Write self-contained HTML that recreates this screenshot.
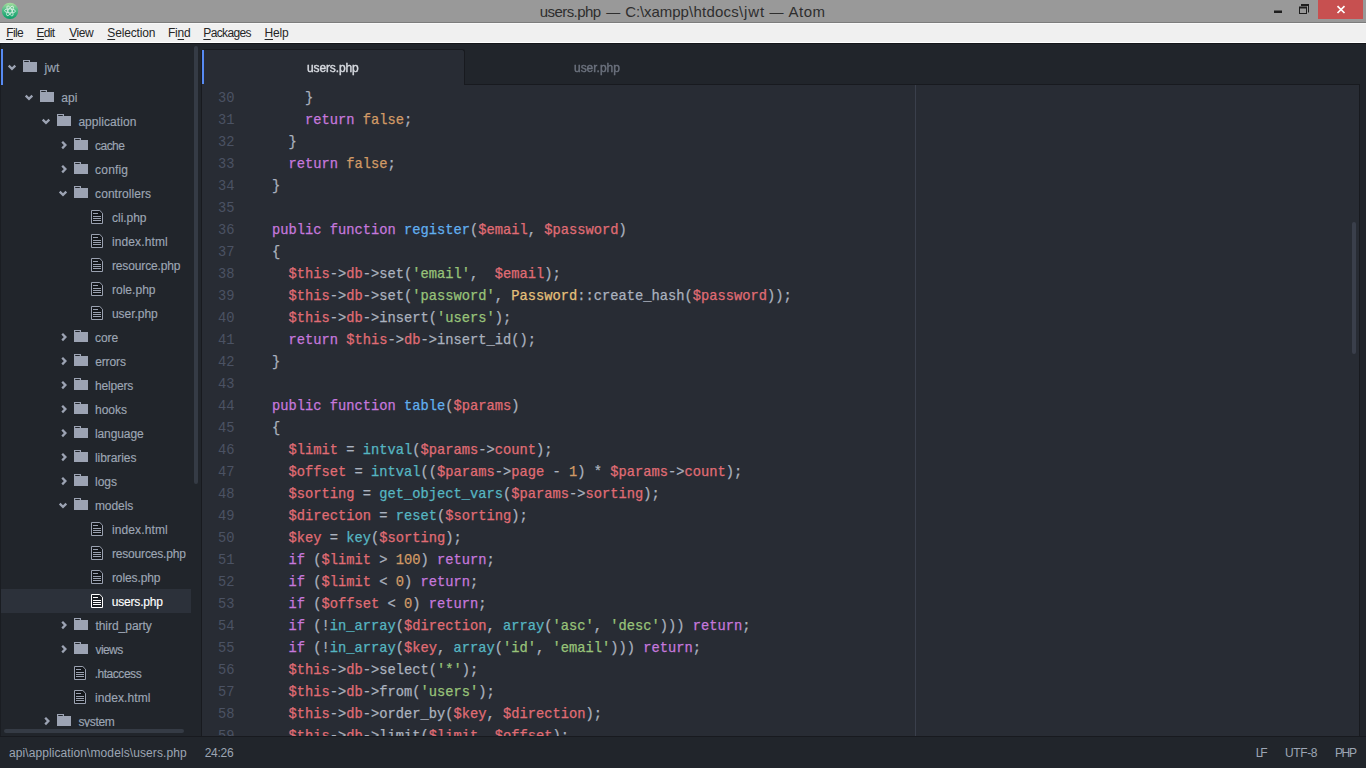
<!DOCTYPE html>
<html><head><meta charset="utf-8"><title>users.php — C:\xampp\htdocs\jwt — Atom</title>
<style>
html,body{margin:0;padding:0;}
body{width:1366px;height:768px;overflow:hidden;position:relative;background:#21252b;font-family:"Liberation Sans",sans-serif;font-size:12px;color:#9da5b4;}
div{position:absolute;box-sizing:border-box;white-space:pre;}
.ic{position:absolute;}
/* title bar */
#title{left:0;top:0;width:1366px;height:23px;background:#999999;border-bottom:1px solid #7c7c7c;}
.tx{top:1px;height:22px;line-height:22px;font-size:15px;color:#2e2e2e;}
#close{left:1318px;top:0;width:45px;height:19px;background:#c75050;}
/* menu */
#menu{left:0;top:23px;width:1366px;height:20px;background:#f0f0f0;border-top:1px solid #f8f8f8;border-bottom:1px solid #ffffff;}
.mi{top:23px;height:21px;line-height:21px;font-size:12px;color:#262626;}
.mi u{text-decoration:underline;text-underline-offset:2px;text-decoration-thickness:1px;}
#topline{left:0;top:43px;width:1366px;height:1px;background:#14161a;}
/* tree */
#tree{left:0;top:44px;width:202px;height:692px;background:#21252b;}
#treeL{left:0;top:44px;width:1px;height:692px;background:#1a1d22;}
.tl{height:24px;line-height:24px;font-size:12px;color:#9da5b4;-webkit-text-stroke:0.15px;}
.tl.sel{color:#ffffff;}
#selrow{left:1px;top:589px;width:190px;height:24px;background:#2c313a;}
#rootbar{left:1px;top:49px;width:2px;height:36px;background:#578af2;}
#tvs{left:194px;top:46px;width:4px;height:438px;background:#353b45;border-radius:2px;}
#ths{left:4px;top:729px;width:180px;height:4px;background:#353b45;border-radius:2px;}
#treeclip{left:0;top:44px;width:191px;height:683px;overflow:hidden;}
#treeclip>div{left:0;top:-44px;width:202px;height:768px;}
/* editor */
#tabbar{left:202px;top:44px;width:1164px;height:41px;background:#21252b;}
#tabline{left:202px;top:84px;width:1158px;height:1px;background:#181a1f;}
#tab1{left:202px;top:49px;width:263px;height:36px;background:#282c34;border-radius:3px 3px 0 0;border-top:1px solid #181a1f;border-right:1px solid #181a1f;}
#tab1bar{left:202px;top:50px;width:2px;height:34px;background:#578af2;}
.tt{top:50px;height:34px;line-height:36px;font-size:12px;-webkit-text-stroke:0.4px;will-change:transform;}
#editor{left:202px;top:85px;width:1157px;height:651px;background:#282c34;}
#edl{left:201px;top:50px;width:1px;height:686px;background:#181a1f;}
#edr{left:1359px;top:84px;width:1px;height:653px;background:#181a1f;}
#evs{left:1352px;top:222px;width:4px;height:132px;background:#3a3f4b;border-radius:2px;}
.ln{left:202px;width:32.5px;text-align:right;height:22px;line-height:22px;font-family:"Liberation Mono",monospace;font-size:13.75px;color:#4b5263;}
.cl{left:255.4px;height:22px;line-height:22px;font-family:"Liberation Mono",monospace;font-size:13.75px;color:#abb2bf;-webkit-text-stroke:0.25px;}
.k{color:#c678dd}.c{color:#d19a66}.f{color:#61afef}.v{color:#e06c75}.s{color:#98c379}.y{color:#e5c07b}.b{color:#56b6c2}
#guide{left:915px;top:85px;width:1px;height:651px;background:#3a3f4b;}
/* status */
#status{left:0;top:736px;width:1366px;height:32px;background:#21252b;border-top:1px solid #181a1f;}
.st{top:738px;height:31px;line-height:31px;font-size:12px;color:#9da5b4;}
</style></head><body>
<div id="title"></div>
<svg class="ic" style="left:1px;top:2px" width="18" height="18" viewBox="0 0 18 18">
<defs><linearGradient id="ag" x1="0" y1="0" x2="0" y2="1"><stop offset="0" stop-color="#aadf9e"/><stop offset="0.45" stop-color="#4fbc87"/><stop offset="1" stop-color="#0a9f68"/></linearGradient></defs>
<circle cx="9" cy="8.9" r="8.2" fill="url(#ag)"/>
<g fill="none" stroke="#ffffff" stroke-width="0.8" opacity="0.8">
<ellipse cx="9" cy="8.9" rx="2.0" ry="5.5" transform="rotate(93 9 8.9)"/>
<ellipse cx="9" cy="8.9" rx="2.0" ry="5.5" transform="rotate(33 9 8.9)"/>
<ellipse cx="9" cy="8.9" rx="2.0" ry="5.5" transform="rotate(-27 9 8.9)"/>
</g></svg>
<div class="tx fx" id="tt0" style="left:539.76px;letter-spacing:-0.562px">users.php </div><div class="tx fx" id="tt1" style="left:606.17px;letter-spacing:0.000px;font-size:14px">— </div><div class="tx fx" id="tt2" style="left:625.24px;letter-spacing:-0.097px">C:\xampp</div><div class="tx fx" id="tt3" style="left:689.11px;letter-spacing:0.204px">\htdocs</div><div class="tx fx" id="tt4" style="left:739.09px;letter-spacing:0.862px">\jwt </div><div class="tx fx" id="tt5" style="left:769.44px;letter-spacing:0.000px;font-size:14px">— </div><div class="tx fx" id="tt6" style="left:788.47px;letter-spacing:0.492px">Atom</div>
<div id="close"></div>
<svg class="ic" style="left:1270px;top:0" width="96" height="22" viewBox="0 0 96 22">
<rect x="4" y="10.5" width="8" height="2.5" fill="#1e1e1e"/>
<path d="M31.5 5.5h7v7" fill="none" stroke="#1e1e1e" stroke-width="1"/><path d="M31 5h8" stroke="#1e1e1e" stroke-width="2"/>
<rect x="29.5" y="7.5" width="7" height="6" fill="none" stroke="#1e1e1e" stroke-width="1"/><path d="M29 7.5h8" stroke="#1e1e1e" stroke-width="2"/>
<path d="M67.5 6.2l7 6.8M74.5 6.2l-7 6.8" stroke="#ffffff" stroke-width="1.7" fill="none"/>
</svg>
<div id="menu"></div>
<div class="mi fx" id="m0" style="left:6.21px;letter-spacing:-0.596px"><u>F</u>ile</div><div class="mi fx" id="m1" style="left:36.60px;letter-spacing:-0.762px"><u>E</u>dit</div><div class="mi fx" id="m2" style="left:69.21px;letter-spacing:-0.412px"><u>V</u>iew</div><div class="mi fx" id="m3" style="left:107.34px;letter-spacing:-0.175px"><u>S</u>election</div><div class="mi fx" id="m4" style="left:167.98px;letter-spacing:-0.194px">Fi<u>n</u>d</div><div class="mi fx" id="m5" style="left:203.34px;letter-spacing:-0.638px"><u>P</u>ackages</div><div class="mi fx" id="m6" style="left:264.60px;letter-spacing:-0.235px"><u>H</u>elp</div>
<div id="topline"></div>

<div id="tree"></div>
<div id="treeL"></div>
<div id="selrow"></div>
<div id="rootbar"></div>
<div id="treeclip"><div>
<svg class="ic" width="16" height="13" viewBox="0 0 16 13" style="left:22.0px;top:60px"><path d="M1 0h7v2h7v10h-14z" fill="#9ca3b3"/><rect x="2.2" y="1" width="4.6" height="1" fill="#21252b"/></svg>
<svg class="ic" width="10" height="8" viewBox="0 0 10 8" style="left:7px;top:64px"><path transform="translate(0.5 0.3)" d="M1.2 1.3L4.5 4.5L7.8 1.3" fill="none" stroke="#9ca3b3" stroke-width="2.3"/></svg>
<div class="tl fx" id="t0" style="left:44.43px;letter-spacing:0.168px;top:56px">jwt</div>
<svg class="ic" width="16" height="13" viewBox="0 0 16 13" style="left:39.0px;top:90px"><path d="M1 0h7v2h7v10h-14z" fill="#9ca3b3"/><rect x="2.2" y="1" width="4.6" height="1" fill="#21252b"/></svg>
<svg class="ic" width="10" height="8" viewBox="0 0 10 8" style="left:24px;top:94px"><path transform="translate(0.5 0.3)" d="M1.2 1.3L4.5 4.5L7.8 1.3" fill="none" stroke="#9ca3b3" stroke-width="2.3"/></svg>
<div class="tl fx" id="t1" style="left:61.14px;letter-spacing:0.151px;top:86px">api</div>
<svg class="ic" width="16" height="13" viewBox="0 0 16 13" style="left:56.0px;top:114px"><path d="M1 0h7v2h7v10h-14z" fill="#9ca3b3"/><rect x="2.2" y="1" width="4.6" height="1" fill="#21252b"/></svg>
<svg class="ic" width="10" height="8" viewBox="0 0 10 8" style="left:41px;top:118px"><path transform="translate(0.5 0.3)" d="M1.2 1.3L4.5 4.5L7.8 1.3" fill="none" stroke="#9ca3b3" stroke-width="2.3"/></svg>
<div class="tl fx" id="t2" style="left:78.39px;letter-spacing:0.064px;top:110px">application</div>
<svg class="ic" width="16" height="13" viewBox="0 0 16 13" style="left:73.0px;top:138px"><path d="M1 0h7v2h7v10h-14z" fill="#9ca3b3"/><rect x="2.2" y="1" width="4.6" height="1" fill="#21252b"/></svg>
<svg class="ic" width="8" height="10" viewBox="0 0 8 10" style="left:60px;top:140px"><path transform="translate(0.9 0.6)" d="M1.3 1.2L4.5 4.5L1.3 7.8" fill="none" stroke="#9ca3b3" stroke-width="2.3"/></svg>
<div class="tl fx" id="t3" style="left:95.11px;letter-spacing:-0.560px;top:134px">cache</div>
<svg class="ic" width="16" height="13" viewBox="0 0 16 13" style="left:73.0px;top:162px"><path d="M1 0h7v2h7v10h-14z" fill="#9ca3b3"/><rect x="2.2" y="1" width="4.6" height="1" fill="#21252b"/></svg>
<svg class="ic" width="8" height="10" viewBox="0 0 8 10" style="left:60px;top:164px"><path transform="translate(0.9 0.6)" d="M1.3 1.2L4.5 4.5L1.3 7.8" fill="none" stroke="#9ca3b3" stroke-width="2.3"/></svg>
<div class="tl fx" id="t4" style="left:95.11px;letter-spacing:0.172px;top:158px">config</div>
<svg class="ic" width="16" height="13" viewBox="0 0 16 13" style="left:73.0px;top:186px"><path d="M1 0h7v2h7v10h-14z" fill="#9ca3b3"/><rect x="2.2" y="1" width="4.6" height="1" fill="#21252b"/></svg>
<svg class="ic" width="10" height="8" viewBox="0 0 10 8" style="left:58px;top:190px"><path transform="translate(0.5 0.3)" d="M1.2 1.3L4.5 4.5L7.8 1.3" fill="none" stroke="#9ca3b3" stroke-width="2.3"/></svg>
<div class="tl fx" id="t5" style="left:95.11px;letter-spacing:0.048px;top:182px">controllers</div>
<svg class="ic" width="14" height="14" viewBox="0 0 14 14" style="left:90.0px;top:210px"><path d="M1.5 0.5H9.8L12.5 3.2V13.5H1.5z" fill="#14171b" stroke="#9aa1b0" stroke-width="1"/><path d="M3 3.5h5M3 6.5h8M3 8.5h8M3 10.5h8" stroke="#9aa1b0" stroke-width="1" fill="none"/></svg>
<div class="tl fx" id="t6" style="left:112.11px;letter-spacing:-0.048px;top:206px">cli.php</div>
<svg class="ic" width="14" height="14" viewBox="0 0 14 14" style="left:90.0px;top:234px"><path d="M1.5 0.5H9.8L12.5 3.2V13.5H1.5z" fill="#14171b" stroke="#9aa1b0" stroke-width="1"/><path d="M3 3.5h5M3 6.5h8M3 8.5h8M3 10.5h8" stroke="#9aa1b0" stroke-width="1" fill="none"/></svg>
<div class="tl fx" id="t7" style="left:111.91px;letter-spacing:0.131px;top:230px">index.html</div>
<svg class="ic" width="14" height="14" viewBox="0 0 14 14" style="left:90.0px;top:258px"><path d="M1.5 0.5H9.8L12.5 3.2V13.5H1.5z" fill="#14171b" stroke="#9aa1b0" stroke-width="1"/><path d="M3 3.5h5M3 6.5h8M3 8.5h8M3 10.5h8" stroke="#9aa1b0" stroke-width="1" fill="none"/></svg>
<div class="tl fx" id="t8" style="left:111.91px;letter-spacing:-0.128px;top:254px">resource.php</div>
<svg class="ic" width="14" height="14" viewBox="0 0 14 14" style="left:90.0px;top:282px"><path d="M1.5 0.5H9.8L12.5 3.2V13.5H1.5z" fill="#14171b" stroke="#9aa1b0" stroke-width="1"/><path d="M3 3.5h5M3 6.5h8M3 8.5h8M3 10.5h8" stroke="#9aa1b0" stroke-width="1" fill="none"/></svg>
<div class="tl fx" id="t9" style="left:111.91px;letter-spacing:0.039px;top:278px">role.php</div>
<svg class="ic" width="14" height="14" viewBox="0 0 14 14" style="left:90.0px;top:306px"><path d="M1.5 0.5H9.8L12.5 3.2V13.5H1.5z" fill="#14171b" stroke="#9aa1b0" stroke-width="1"/><path d="M3 3.5h5M3 6.5h8M3 8.5h8M3 10.5h8" stroke="#9aa1b0" stroke-width="1" fill="none"/></svg>
<div class="tl fx" id="t10" style="left:111.93px;letter-spacing:-0.025px;top:302px">user.php</div>
<svg class="ic" width="16" height="13" viewBox="0 0 16 13" style="left:73.0px;top:330px"><path d="M1 0h7v2h7v10h-14z" fill="#9ca3b3"/><rect x="2.2" y="1" width="4.6" height="1" fill="#21252b"/></svg>
<svg class="ic" width="8" height="10" viewBox="0 0 8 10" style="left:60px;top:332px"><path transform="translate(0.9 0.6)" d="M1.3 1.2L4.5 4.5L1.3 7.8" fill="none" stroke="#9ca3b3" stroke-width="2.3"/></svg>
<div class="tl fx" id="t11" style="left:95.11px;letter-spacing:-0.087px;top:326px">core</div>
<svg class="ic" width="16" height="13" viewBox="0 0 16 13" style="left:73.0px;top:354px"><path d="M1 0h7v2h7v10h-14z" fill="#9ca3b3"/><rect x="2.2" y="1" width="4.6" height="1" fill="#21252b"/></svg>
<svg class="ic" width="8" height="10" viewBox="0 0 8 10" style="left:60px;top:356px"><path transform="translate(0.9 0.6)" d="M1.3 1.2L4.5 4.5L1.3 7.8" fill="none" stroke="#9ca3b3" stroke-width="2.3"/></svg>
<div class="tl fx" id="t12" style="left:95.20px;letter-spacing:-0.121px;top:350px">errors</div>
<svg class="ic" width="16" height="13" viewBox="0 0 16 13" style="left:73.0px;top:378px"><path d="M1 0h7v2h7v10h-14z" fill="#9ca3b3"/><rect x="2.2" y="1" width="4.6" height="1" fill="#21252b"/></svg>
<svg class="ic" width="8" height="10" viewBox="0 0 8 10" style="left:60px;top:380px"><path transform="translate(0.9 0.6)" d="M1.3 1.2L4.5 4.5L1.3 7.8" fill="none" stroke="#9ca3b3" stroke-width="2.3"/></svg>
<div class="tl fx" id="t13" style="left:94.94px;letter-spacing:-0.182px;top:374px">helpers</div>
<svg class="ic" width="16" height="13" viewBox="0 0 16 13" style="left:73.0px;top:402px"><path d="M1 0h7v2h7v10h-14z" fill="#9ca3b3"/><rect x="2.2" y="1" width="4.6" height="1" fill="#21252b"/></svg>
<svg class="ic" width="8" height="10" viewBox="0 0 8 10" style="left:60px;top:404px"><path transform="translate(0.9 0.6)" d="M1.3 1.2L4.5 4.5L1.3 7.8" fill="none" stroke="#9ca3b3" stroke-width="2.3"/></svg>
<div class="tl fx" id="t14" style="left:94.98px;letter-spacing:0.010px;top:398px">hooks</div>
<svg class="ic" width="16" height="13" viewBox="0 0 16 13" style="left:73.0px;top:426px"><path d="M1 0h7v2h7v10h-14z" fill="#9ca3b3"/><rect x="2.2" y="1" width="4.6" height="1" fill="#21252b"/></svg>
<svg class="ic" width="8" height="10" viewBox="0 0 8 10" style="left:60px;top:428px"><path transform="translate(0.9 0.6)" d="M1.3 1.2L4.5 4.5L1.3 7.8" fill="none" stroke="#9ca3b3" stroke-width="2.3"/></svg>
<div class="tl fx" id="t15" style="left:94.91px;letter-spacing:-0.079px;top:422px">language</div>
<svg class="ic" width="16" height="13" viewBox="0 0 16 13" style="left:73.0px;top:450px"><path d="M1 0h7v2h7v10h-14z" fill="#9ca3b3"/><rect x="2.2" y="1" width="4.6" height="1" fill="#21252b"/></svg>
<svg class="ic" width="8" height="10" viewBox="0 0 8 10" style="left:60px;top:452px"><path transform="translate(0.9 0.6)" d="M1.3 1.2L4.5 4.5L1.3 7.8" fill="none" stroke="#9ca3b3" stroke-width="2.3"/></svg>
<div class="tl fx" id="t16" style="left:94.91px;letter-spacing:-0.054px;top:446px">libraries</div>
<svg class="ic" width="16" height="13" viewBox="0 0 16 13" style="left:73.0px;top:474px"><path d="M1 0h7v2h7v10h-14z" fill="#9ca3b3"/><rect x="2.2" y="1" width="4.6" height="1" fill="#21252b"/></svg>
<svg class="ic" width="8" height="10" viewBox="0 0 8 10" style="left:60px;top:476px"><path transform="translate(0.9 0.6)" d="M1.3 1.2L4.5 4.5L1.3 7.8" fill="none" stroke="#9ca3b3" stroke-width="2.3"/></svg>
<div class="tl fx" id="t17" style="left:94.94px;letter-spacing:0.032px;top:470px">logs</div>
<svg class="ic" width="16" height="13" viewBox="0 0 16 13" style="left:73.0px;top:498px"><path d="M1 0h7v2h7v10h-14z" fill="#9ca3b3"/><rect x="2.2" y="1" width="4.6" height="1" fill="#21252b"/></svg>
<svg class="ic" width="10" height="8" viewBox="0 0 10 8" style="left:58px;top:502px"><path transform="translate(0.5 0.3)" d="M1.2 1.3L4.5 4.5L7.8 1.3" fill="none" stroke="#9ca3b3" stroke-width="2.3"/></svg>
<div class="tl fx" id="t18" style="left:94.94px;letter-spacing:-0.059px;top:494px">models</div>
<svg class="ic" width="14" height="14" viewBox="0 0 14 14" style="left:90.0px;top:522px"><path d="M1.5 0.5H9.8L12.5 3.2V13.5H1.5z" fill="#14171b" stroke="#9aa1b0" stroke-width="1"/><path d="M3 3.5h5M3 6.5h8M3 8.5h8M3 10.5h8" stroke="#9aa1b0" stroke-width="1" fill="none"/></svg>
<div class="tl fx" id="t19" style="left:111.91px;letter-spacing:0.131px;top:518px">index.html</div>
<svg class="ic" width="14" height="14" viewBox="0 0 14 14" style="left:90.0px;top:546px"><path d="M1.5 0.5H9.8L12.5 3.2V13.5H1.5z" fill="#14171b" stroke="#9aa1b0" stroke-width="1"/><path d="M3 3.5h5M3 6.5h8M3 8.5h8M3 10.5h8" stroke="#9aa1b0" stroke-width="1" fill="none"/></svg>
<div class="tl fx" id="t20" style="left:111.91px;letter-spacing:-0.172px;top:542px">resources.php</div>
<svg class="ic" width="14" height="14" viewBox="0 0 14 14" style="left:90.0px;top:570px"><path d="M1.5 0.5H9.8L12.5 3.2V13.5H1.5z" fill="#14171b" stroke="#9aa1b0" stroke-width="1"/><path d="M3 3.5h5M3 6.5h8M3 8.5h8M3 10.5h8" stroke="#9aa1b0" stroke-width="1" fill="none"/></svg>
<div class="tl fx" id="t21" style="left:111.91px;letter-spacing:-0.091px;top:566px">roles.php</div>
<svg class="ic" width="14" height="14" viewBox="0 0 14 14" style="left:90.0px;top:594px"><path d="M1.5 0.5H9.8L12.5 3.2V13.5H1.5z" fill="#1a1d23" stroke="#ffffff" stroke-width="1"/><path d="M3 3.5h5M3 6.5h8M3 8.5h8M3 10.5h8" stroke="#ffffff" stroke-width="1" fill="none"/></svg>
<div class="tl sel fx" id="t22" style="left:111.83px;letter-spacing:-0.201px;top:590px">users.php</div>
<svg class="ic" width="16" height="13" viewBox="0 0 16 13" style="left:73.0px;top:618px"><path d="M1 0h7v2h7v10h-14z" fill="#9ca3b3"/><rect x="2.2" y="1" width="4.6" height="1" fill="#21252b"/></svg>
<svg class="ic" width="8" height="10" viewBox="0 0 8 10" style="left:60px;top:620px"><path transform="translate(0.9 0.6)" d="M1.3 1.2L4.5 4.5L1.3 7.8" fill="none" stroke="#9ca3b3" stroke-width="2.3"/></svg>
<div class="tl fx" id="t23" style="left:95.42px;letter-spacing:-0.030px;top:614px">third_party</div>
<svg class="ic" width="16" height="13" viewBox="0 0 16 13" style="left:73.0px;top:642px"><path d="M1 0h7v2h7v10h-14z" fill="#9ca3b3"/><rect x="2.2" y="1" width="4.6" height="1" fill="#21252b"/></svg>
<svg class="ic" width="8" height="10" viewBox="0 0 8 10" style="left:60px;top:644px"><path transform="translate(0.9 0.6)" d="M1.3 1.2L4.5 4.5L1.3 7.8" fill="none" stroke="#9ca3b3" stroke-width="2.3"/></svg>
<div class="tl fx" id="t24" style="left:95.44px;letter-spacing:-0.554px;top:638px">views</div>
<svg class="ic" width="14" height="14" viewBox="0 0 14 14" style="left:73.0px;top:666px"><path d="M1.5 0.5H9.8L12.5 3.2V13.5H1.5z" fill="#14171b" stroke="#9aa1b0" stroke-width="1"/><path d="M3 3.5h5M3 6.5h8M3 8.5h8M3 10.5h8" stroke="#9aa1b0" stroke-width="1" fill="none"/></svg>
<div class="tl fx" id="t25" style="left:94.65px;letter-spacing:-0.461px;top:662px">.htaccess</div>
<svg class="ic" width="14" height="14" viewBox="0 0 14 14" style="left:73.0px;top:690px"><path d="M1.5 0.5H9.8L12.5 3.2V13.5H1.5z" fill="#14171b" stroke="#9aa1b0" stroke-width="1"/><path d="M3 3.5h5M3 6.5h8M3 8.5h8M3 10.5h8" stroke="#9aa1b0" stroke-width="1" fill="none"/></svg>
<div class="tl fx" id="t26" style="left:94.91px;letter-spacing:0.090px;top:686px">index.html</div>
<svg class="ic" width="16" height="13" viewBox="0 0 16 13" style="left:56.0px;top:714px"><path d="M1 0h7v2h7v10h-14z" fill="#9ca3b3"/><rect x="2.2" y="1" width="4.6" height="1" fill="#21252b"/></svg>
<svg class="ic" width="8" height="10" viewBox="0 0 8 10" style="left:43px;top:716px"><path transform="translate(0.9 0.6)" d="M1.3 1.2L4.5 4.5L1.3 7.8" fill="none" stroke="#9ca3b3" stroke-width="2.3"/></svg>
<div class="tl fx" id="t27" style="left:78.38px;letter-spacing:-0.311px;top:710px">system</div>
</div></div>
<div id="tvs"></div>
<div id="ths"></div>

<div id="tabbar"></div>
<div id="tabline"></div>
<div id="tab1"></div>
<div id="tab1bar"></div>
<div class="tt fx" id="tabA" style="left:307.43px;letter-spacing:-0.131px;color:#d7dae0">users.php</div>
<div class="tt fx" id="tabB" style="left:573.86px;letter-spacing:-0.027px;color:#6b717d">user.php</div>
<div id="editor"></div>
<div id="edl"></div>
<div id="edr"></div>
<div id="guide"></div>
<div id="evs"></div>
<div id="codeclip" style="left:202px;top:85px;width:1157px;height:651px;overflow:hidden"><div style="left:-202px;top:-85px;width:1366px;height:768px">
<div class="ln" style="top:88px">30</div><div class="cl" style="top:88px">      }</div>
<div class="ln" style="top:110px">31</div><div class="cl" style="top:110px">      <span class="k">return</span> <span class="c">false</span>;</div>
<div class="ln" style="top:132px">32</div><div class="cl" style="top:132px">    }</div>
<div class="ln" style="top:154px">33</div><div class="cl" style="top:154px">    <span class="k">return</span> <span class="c">false</span>;</div>
<div class="ln" style="top:176px">34</div><div class="cl" style="top:176px">  }</div>
<div class="ln" style="top:198px">35</div><div class="cl" style="top:198px"></div>
<div class="ln" style="top:220px">36</div><div class="cl" style="top:220px">  <span class="k">public</span> <span class="k">function</span> <span class="f">register</span>(<span class="v">$email</span>, <span class="v">$password</span>)</div>
<div class="ln" style="top:242px">37</div><div class="cl" style="top:242px">  {</div>
<div class="ln" style="top:264px">38</div><div class="cl" style="top:264px">    <span class="v">$this</span>-&gt;<span class="v">db</span>-&gt;set(<span class="s">&#x27;email&#x27;</span>,  <span class="v">$email</span>);</div>
<div class="ln" style="top:286px">39</div><div class="cl" style="top:286px">    <span class="v">$this</span>-&gt;<span class="v">db</span>-&gt;set(<span class="s">&#x27;password&#x27;</span>, <span class="y">Password</span>::create_hash(<span class="v">$password</span>));</div>
<div class="ln" style="top:308px">40</div><div class="cl" style="top:308px">    <span class="v">$this</span>-&gt;<span class="v">db</span>-&gt;insert(<span class="s">&#x27;users&#x27;</span>);</div>
<div class="ln" style="top:330px">41</div><div class="cl" style="top:330px">    <span class="k">return</span> <span class="v">$this</span>-&gt;<span class="v">db</span>-&gt;insert_id();</div>
<div class="ln" style="top:352px">42</div><div class="cl" style="top:352px">  }</div>
<div class="ln" style="top:374px">43</div><div class="cl" style="top:374px"></div>
<div class="ln" style="top:396px">44</div><div class="cl" style="top:396px">  <span class="k">public</span> <span class="k">function</span> <span class="f">table</span>(<span class="v">$params</span>)</div>
<div class="ln" style="top:418px">45</div><div class="cl" style="top:418px">  {</div>
<div class="ln" style="top:440px">46</div><div class="cl" style="top:440px">    <span class="v">$limit</span> = <span class="b">intval</span>(<span class="v">$params</span>-&gt;<span class="v">count</span>);</div>
<div class="ln" style="top:462px">47</div><div class="cl" style="top:462px">    <span class="v">$offset</span> = <span class="b">intval</span>((<span class="v">$params</span>-&gt;<span class="v">page</span> - <span class="c">1</span>) * <span class="v">$params</span>-&gt;<span class="v">count</span>);</div>
<div class="ln" style="top:484px">48</div><div class="cl" style="top:484px">    <span class="v">$sorting</span> = <span class="b">get_object_vars</span>(<span class="v">$params</span>-&gt;<span class="v">sorting</span>);</div>
<div class="ln" style="top:506px">49</div><div class="cl" style="top:506px">    <span class="v">$direction</span> = <span class="b">reset</span>(<span class="v">$sorting</span>);</div>
<div class="ln" style="top:528px">50</div><div class="cl" style="top:528px">    <span class="v">$key</span> = <span class="b">key</span>(<span class="v">$sorting</span>);</div>
<div class="ln" style="top:550px">51</div><div class="cl" style="top:550px">    <span class="k">if</span> (<span class="v">$limit</span> &gt; <span class="c">100</span>) <span class="k">return</span>;</div>
<div class="ln" style="top:572px">52</div><div class="cl" style="top:572px">    <span class="k">if</span> (<span class="v">$limit</span> &lt; <span class="c">0</span>) <span class="k">return</span>;</div>
<div class="ln" style="top:594px">53</div><div class="cl" style="top:594px">    <span class="k">if</span> (<span class="v">$offset</span> &lt; <span class="c">0</span>) <span class="k">return</span>;</div>
<div class="ln" style="top:616px">54</div><div class="cl" style="top:616px">    <span class="k">if</span> (!<span class="b">in_array</span>(<span class="v">$direction</span>, <span class="b">array</span>(<span class="s">&#x27;asc&#x27;</span>, <span class="s">&#x27;desc&#x27;</span>))) <span class="k">return</span>;</div>
<div class="ln" style="top:638px">55</div><div class="cl" style="top:638px">    <span class="k">if</span> (!<span class="b">in_array</span>(<span class="v">$key</span>, <span class="b">array</span>(<span class="s">&#x27;id&#x27;</span>, <span class="s">&#x27;email&#x27;</span>))) <span class="k">return</span>;</div>
<div class="ln" style="top:660px">56</div><div class="cl" style="top:660px">    <span class="v">$this</span>-&gt;<span class="v">db</span>-&gt;select(<span class="s">&#x27;*&#x27;</span>);</div>
<div class="ln" style="top:682px">57</div><div class="cl" style="top:682px">    <span class="v">$this</span>-&gt;<span class="v">db</span>-&gt;from(<span class="s">&#x27;users&#x27;</span>);</div>
<div class="ln" style="top:704px">58</div><div class="cl" style="top:704px">    <span class="v">$this</span>-&gt;<span class="v">db</span>-&gt;order_by(<span class="v">$key</span>, <span class="v">$direction</span>);</div>
<div class="ln" style="top:726px">59</div><div class="cl" style="top:726px">    <span class="v">$this</span>-&gt;<span class="v">db</span>-&gt;limit(<span class="v">$limit</span>, <span class="v">$offset</span>);</div>
</div></div>
<div id="status"></div>
<div class="st fx" id="s0" style="left:8.90px;letter-spacing:0.097px">api\application\models\users.php</div>
<div class="st fx" id="s1" style="left:204.75px;letter-spacing:-0.303px">24:26</div>
<div class="st fx" id="s2" style="left:1255.85px;letter-spacing:-2.163px">LF</div>
<div class="st fx" id="s3" style="left:1285.06px;letter-spacing:-0.408px">UTF-8</div>
<div class="st fx" id="s4" style="left:1334.99px;letter-spacing:-1.388px">PHP</div>
</body></html>
